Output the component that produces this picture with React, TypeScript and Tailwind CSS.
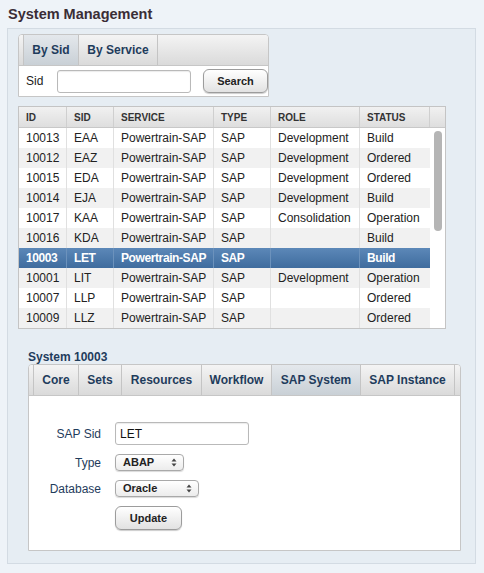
import React from 'react';

const rows = [
  { id: '10013', sid: 'EAA', service: 'Powertrain-SAP', type: 'SAP', role: 'Development', status: 'Build' },
  { id: '10012', sid: 'EAZ', service: 'Powertrain-SAP', type: 'SAP', role: 'Development', status: 'Ordered' },
  { id: '10015', sid: 'EDA', service: 'Powertrain-SAP', type: 'SAP', role: 'Development', status: 'Ordered' },
  { id: '10014', sid: 'EJA', service: 'Powertrain-SAP', type: 'SAP', role: 'Development', status: 'Build' },
  { id: '10017', sid: 'KAA', service: 'Powertrain-SAP', type: 'SAP', role: 'Consolidation', status: 'Operation' },
  { id: '10016', sid: 'KDA', service: 'Powertrain-SAP', type: 'SAP', role: '', status: 'Build' },
  { id: '10003', sid: 'LET', service: 'Powertrain-SAP', type: 'SAP', role: '', status: 'Build' },
  { id: '10001', sid: 'LIT', service: 'Powertrain-SAP', type: 'SAP', role: 'Development', status: 'Operation' },
  { id: '10007', sid: 'LLP', service: 'Powertrain-SAP', type: 'SAP', role: '', status: 'Ordered' },
  { id: '10009', sid: 'LLZ', service: 'Powertrain-SAP', type: 'SAP', role: '', status: 'Ordered' },
];

const cols = [
  { key: 'id', label: 'ID', w: 'w-[48px]' },
  { key: 'sid', label: 'SID', w: 'w-[47px]' },
  { key: 'service', label: 'SERVICE', w: 'w-[100px]' },
  { key: 'type', label: 'TYPE', w: 'w-[57px]' },
  { key: 'role', label: 'ROLE', w: 'w-[89px]' },
  { key: 'status', label: 'STATUS', w: 'w-[70px]' },
] as const;

const selectedId = '10003';

const tabBar = 'bg-gradient-to-b from-[#f4f4f4] to-[#dadada]';
const tabActive = 'bg-gradient-to-b from-[#e4e8ec] to-[#c9d0d6]';

function Tab({ label, w, active }: { label: string; w: string; active?: boolean }) {
  return (
    <div
      className={`${w} h-full flex items-center justify-center border-r border-[#c4c4c4] text-[12px] font-bold text-[#1f3c5c] ${active ? tabActive : ''}`}
    >
      {label}
    </div>
  );
}

function Arrows() {
  return (
    <svg width="6" height="9" viewBox="0 0 6 9" className="shrink-0">
      <path d="M3 0.5 L5.5 3.5 H0.5 Z" fill="#444" />
      <path d="M3 8.5 L5.5 5.5 H0.5 Z" fill="#444" />
    </svg>
  );
}

function Select({ value, w }: { value: string; w: string }) {
  return (
    <div
      className={`${w} h-[17px] flex items-center justify-between pl-[7px] pr-[6px] rounded-[4px] border border-[#a9a9a9] bg-gradient-to-b from-white to-[#ececec] shadow-[0_1px_1px_rgba(0,0,0,0.15)] text-[11px] font-bold text-[#222]`}
    >
      <span>{value}</span>
      <Arrows />
    </div>
  );
}

export default function App() {
  return (
    <div className="w-[484px] h-[573px] bg-[#eef3f8] pt-[5px] font-['Liberation_Sans',Arial,sans-serif] text-[#222]">
      <h1 className="ml-[8px] text-[14.5px] leading-[18px] font-bold text-[#3a2d36]">System Management</h1>

      <div className="mt-[5px] ml-[7px] w-[469px] h-[536px] border border-[#d3dbe3] bg-[#e6edf3] pl-[10px] pt-[5px]">
        {/* search box */}
        <div className="w-[251px] border border-[#c6c6c6] rounded-t-[4px] overflow-hidden bg-white">
          <div className={`h-[31px] flex ${tabBar} border-b border-[#c6c6c6]`}>
            <div className="w-[5px] h-full border-r border-[#c4c4c4]" />
            <Tab label="By Sid" w="w-[55px]" active />
            <Tab label="By Service" w="w-[79px]" />
          </div>
          <div className="h-[30px] flex items-center pl-[7px] text-[12px]">
            <span className="w-[31px]">Sid</span>
            <div className="w-[134px] h-[23px] rounded-[3px] border border-[#b9b9b9] bg-white shadow-[inset_0_1px_1px_rgba(0,0,0,0.08)]" />
            <button className="ml-[12px] w-[65px] h-[24px] rounded-[6px] border border-[#9c9c9c] bg-gradient-to-b from-white to-[#e2e2e2] shadow-[0_1px_1px_rgba(0,0,0,0.2)] text-[11px] font-bold text-[#222]">
              Search
            </button>
          </div>
        </div>

        {/* table */}
        <div className="mt-[9px] w-[428px] border border-[#c4c4c4] bg-white">
          <div className="h-[21px] flex bg-gradient-to-b from-[#f1f1f1] to-[#dedede] border-b border-[#c8c8c8]">
            {cols.map((c) => (
              <div
                key={c.key}
                className={`${c.w} h-full flex items-center pl-[7px] border-r border-[#cfcfcf] text-[10px] font-bold text-[#333]`}
              >
                {c.label}
              </div>
            ))}
            <div className="flex-1" />
          </div>
          <div className="flex">
            <div className="w-[411px]">
              {rows.map((r, i) => {
                const sel = r.id === selectedId;
                const bg = sel
                  ? 'bg-gradient-to-b from-[#5c88b8] to-[#3f6c9e] text-white font-bold tracking-[-0.4px]'
                  : i % 2 === 1
                    ? 'bg-[#f1f1f1]'
                    : 'bg-white';
                return (
                  <div key={r.id} className={`h-[20px] flex ${bg}`}>
                    {cols.map((c) => (
                      <div
                        key={c.key}
                        className={`${c.w} h-full flex items-center pl-[7px] text-[12px] whitespace-nowrap overflow-hidden border-r ${sel ? 'border-[#6c92bc]' : 'border-[#e0e0e0]'} ${c.key === 'status' ? 'border-r-0' : ''}`}
                      >
                        {r[c.key]}
                      </div>
                    ))}
                  </div>
                );
              })}
            </div>
            <div className="w-[17px] bg-white pt-[3px] flex justify-center">
              <div className="w-[8px] h-[100px] rounded-full bg-[#b5b5b5]" />
            </div>
          </div>
        </div>

        {/* detail */}
        <div className="ml-[10px] mt-[21px]">
          <div className="text-[12px] leading-[14px] font-bold text-[#1f3c5c]">System 10003</div>
          <div className="w-[433px] border border-[#c6c6c6] rounded-t-[4px] overflow-hidden bg-white">
            <div className={`h-[31px] flex ${tabBar} border-b border-[#c6c6c6]`}>
              <div className="w-[5px] h-full border-r border-[#c4c4c4]" />
              <Tab label="Core" w="w-[45px]" />
              <Tab label="Sets" w="w-[43px]" />
              <Tab label="Resources" w="w-[80px]" />
              <Tab label="Workflow" w="w-[70px]" />
              <Tab label="SAP System" w="w-[89px]" active />
              <Tab label="SAP Instance" w="w-[94px]" />
            </div>
            <div className="h-[154px] pt-[26px] text-[12px] text-[#1f3c5c]">
              <div className="flex items-center h-[23px]">
                <span className="w-[72px] text-right">SAP Sid</span>
                <div className="ml-[14px] w-[134px] h-[23px] rounded-[3px] border border-[#b9b9b9] bg-white flex items-center pl-[4px] text-[12px] text-[#111] shadow-[inset_0_1px_1px_rgba(0,0,0,0.08)]">
                  LET
                </div>
              </div>
              <div className="flex items-center mt-[9px] h-[17px]">
                <span className="w-[72px] text-right">Type</span>
                <div className="ml-[14px]">
                  <Select value="ABAP" w="w-[69px]" />
                </div>
              </div>
              <div className="flex items-center mt-[9px] h-[17px]">
                <span className="w-[72px] text-right">Database</span>
                <div className="ml-[14px]">
                  <Select value="Oracle" w="w-[84px]" />
                </div>
              </div>
              <div className="flex items-center mt-[9px]">
                <span className="w-[72px]" />
                <button className="ml-[14px] w-[67px] h-[24px] rounded-[6px] border border-[#9c9c9c] bg-gradient-to-b from-white to-[#e2e2e2] shadow-[0_1px_1px_rgba(0,0,0,0.2)] text-[11px] font-bold text-[#222]">
                  Update
                </button>
              </div>
            </div>
          </div>
        </div>
      </div>
    </div>
  );
}
